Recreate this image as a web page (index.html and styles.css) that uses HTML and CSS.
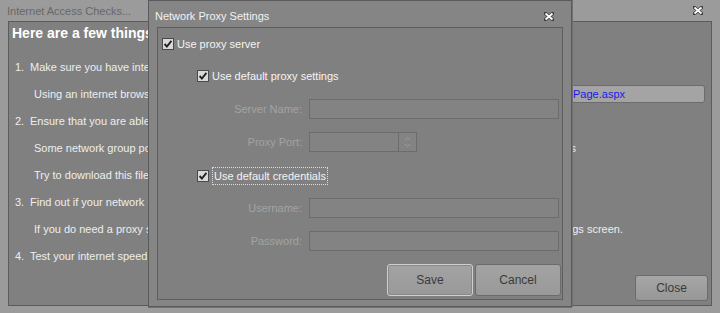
FILE: index.html
```html
<!DOCTYPE html>
<html lang="en">
<head>
  <meta charset="UTF-8">
  <title>Internet Access Checks</title>
  <link rel="stylesheet" href="styles.css">
</head>
<body>

  <!-- Main window -->
  <div class="window">
    <div class="window-title">
      <span>Internet Access Checks...</span>
      <svg class="close-x" width="10" height="9" viewBox="0 0 10 9"><path d="M1.5 1.5 L8.5 7.5 M8.5 1.5 L1.5 7.5" stroke="#3d3d3d" stroke-width="3.6" stroke-linecap="round"/><path d="M1.5 1.5 L8.5 7.5 M8.5 1.5 L1.5 7.5" stroke="#fff" stroke-width="1.8"/></svg>
    </div>

    <div class="window-body">
      <h1>Here are a few things you can check</h1>

      <div class="lines">
        <div class="line step"><span class="text"><span class="num">1.</span>Make sure you have internet access</span></div>
        <div class="line sub">
          <span class="text">Using an internet browser, navigate to:</span>
          <span class="url-box"><span>http://www.example.com/LandingPage.aspx</span></span>
        </div>
        <div class="line step"><span class="text"><span class="num">2.</span>Ensure that you are able to download files</span></div>
        <div class="line sub">
          <span class="text">Some network group policies prevent downloading</span>
          <span class="tail tail-s"><span>certain file types</span></span>
        </div>
        <div class="line sub"><span class="text">Try to download this file from the server</span></div>
        <div class="line step"><span class="text"><span class="num">3.</span>Find out if your network uses a proxy server</span></div>
        <div class="line sub">
          <span class="text">If you do need a proxy server, enter it</span>
          <span class="tail tail-screen"><span>in the Proxy Settings screen.</span></span>
        </div>
        <div class="line step"><span class="text"><span class="num">4.</span>Test your internet speed</span></div>
      </div>

      <button class="btn close-btn">Close</button>
    </div>
  </div>

  <!-- Proxy dialog, lies over the main window -->
  <div class="dialog">
    <div class="dialog-title">
      <span>Network Proxy Settings</span>
      <svg class="close-x" width="10" height="9" viewBox="0 0 10 9"><path d="M1.5 1.5 L8.5 7.5 M8.5 1.5 L1.5 7.5" stroke="#3d3d3d" stroke-width="3.6" stroke-linecap="round"/><path d="M1.5 1.5 L8.5 7.5 M8.5 1.5 L1.5 7.5" stroke="#fff" stroke-width="1.8"/></svg>
    </div>

    <div class="dialog-body">
      <label class="check row-proxy">
        <svg class="box" width="12" height="12" viewBox="0 0 12 12"><rect x="0.5" y="0.5" width="11" height="11" fill="#d9d9d9" stroke="#4a4a4a"/><path d="M2.6 6 L4.9 8.6 L9.4 2.8" fill="none" stroke="#222" stroke-width="1.9"/></svg>
        <span>Use proxy server</span>
      </label>

      <label class="check indent row-default">
        <svg class="box" width="12" height="12" viewBox="0 0 12 12"><rect x="0.5" y="0.5" width="11" height="11" fill="#d9d9d9" stroke="#4a4a4a"/><path d="M2.6 6 L4.9 8.6 L9.4 2.8" fill="none" stroke="#222" stroke-width="1.9"/></svg>
        <span>Use default proxy settings</span>
      </label>

      <div class="field row-server">
        <span class="field-label">Server Name:</span>
        <span class="input"></span>
      </div>

      <div class="field row-port">
        <span class="field-label">Proxy Port:</span>
        <span class="input port">
          <span class="spin">
            <svg width="7" height="14" viewBox="0 0 7 14"><path d="M1 5 L3.5 2.5 L6 5 M1 9 L3.5 11.5 L6 9" fill="none" stroke="#9a9a9a" stroke-width="1"/></svg>
          </span>
        </span>
      </div>

      <label class="check indent row-cred">
        <svg class="box" width="12" height="12" viewBox="0 0 12 12"><rect x="0.5" y="0.5" width="11" height="11" fill="#d9d9d9" stroke="#4a4a4a"/><path d="M2.6 6 L4.9 8.6 L9.4 2.8" fill="none" stroke="#222" stroke-width="1.9"/></svg>
        <span class="focus">Use default credentials</span>
      </label>

      <div class="field row-user">
        <span class="field-label">Username:</span>
        <span class="input"></span>
      </div>

      <div class="field row-pass">
        <span class="field-label">Password:</span>
        <span class="input"></span>
      </div>

      <div class="buttons">
        <button class="btn btn-default">Save</button>
        <button class="btn">Cancel</button>
      </div>
    </div>
  </div>

</body>
</html>
```

FILE: styles.css
```css
body {
  margin: 0;
  font-family: "Liberation Sans", Arial, sans-serif;
  font-size: 11px;
  background-color: #9b9b9b;
}

/* Main window */
.window {
  width: 720px;
  height: 313px;
  background-color: #9b9b9b;
  display: flex;
  flex-direction: column;
}

.window-title {
  height: 21px;
  display: flex;
  align-items: center;
  justify-content: space-between;
  padding: 0 17px 0 7px;
  color: #686868;
}

.window-body {
  flex: 1;
  margin: 0 8px 7px;
  border: 1px solid #5c5c5c;
  background-color: #808080;
  color: #eeeeee;
  display: flex;
  flex-direction: column;
  padding-left: 3px;
}

h1 {
  margin: 2px 0 0;
  max-width: 136px;
  overflow: hidden;
  font-size: 14px;
  line-height: 18px;
  color: #ffffff;
  white-space: nowrap;
}

.lines {
  margin-top: 12px;
}

.line {
  height: 27px;
  line-height: 27px;
  display: flex;
  align-items: center;
  white-space: nowrap;
}

.line .text {
  flex: 0 1 auto;
  min-width: 0;
  overflow: hidden;
}

.step {
  padding-left: 3px;
}

.step .text {
  max-width: 136px;
}

.num {
  display: inline-block;
  width: 15px;
}

.sub {
  padding-left: 22px;
}

.sub .text {
  max-width: 117px;
}

/* only the right end of these shows beside the dialog */
.url-box {
  flex: 0 0 139px;
  margin: -2px 6px 0 auto;
  height: 18px;
  line-height: 16px;
  box-sizing: border-box;
  border: 1px solid #6c6c6c;
  border-radius: 3px;
  background-color: #a4a4a4;
  color: #1a1ae6;
  display: flex;
  justify-content: flex-end;
  padding-right: 79px;
  overflow: hidden;
}

.tail {
  margin-left: auto;
  flex-shrink: 0;
  display: flex;
  justify-content: flex-end;
  overflow: hidden;
}

.tail-s {
  width: 10px;
  padding-right: 135px;
}

.tail-screen {
  width: 57px;
  padding-right: 88px;
}

/* Buttons */
.btn {
  font-family: inherit;
  font-size: 12px;
  color: #3a3a3a;
  border: 1px solid #6b6b6b;
  border-radius: 3px;
  background: linear-gradient(#a6a6a6, #979797);
  padding: 0;
}

.close-btn {
  align-self: flex-end;
  margin: auto 3px 4px 0;
  width: 73px;
  height: 26px;
}

/* Proxy dialog */
.dialog {
  position: absolute;
  left: 148px;
  top: 0;
  width: 424px;
  height: 307px;
  box-sizing: border-box;
  border: 1px solid #5a5a5a;
  box-shadow: 1px 0 0 #707070, 0 1px 0 #707070;
  background-color: #858585;
  display: flex;
  flex-direction: column;
}

.dialog-title {
  height: 26px;
  box-sizing: border-box;
  padding: 4px 17px 0 6px;
  display: flex;
  align-items: center;
  justify-content: space-between;
  color: #f2f2f2;
}

.dialog-body {
  flex: 1;
  margin: 0 8px 6px;
  border: 1px solid #5e5e5e;
  background-color: #808080;
  padding: 0 1px 0 0;
  display: flex;
  flex-direction: column;
}

.check {
  display: flex;
  align-items: center;
  gap: 3px;
  color: #f4f4f4;
  padding-left: 4px;
  height: 16px;
}

.check.indent {
  padding-left: 39px;
}

.row-proxy {
  margin-top: 8px;
}

.row-default {
  margin-top: 16px;
}

.row-cred {
  margin-top: 15px;
  height: 18px;
}

.focus {
  border: 1px dotted #dddddd;
  padding: 1px;
  line-height: 14px;
}

.field {
  display: flex;
  align-items: center;
  height: 20px;
}

.field-label {
  width: 144px;
  margin-right: 7px;
  text-align: right;
  color: #a3a3a3;
}

.input {
  width: 250px;
  height: 20px;
  box-sizing: border-box;
  border: 1px solid #6c6c6c;
  background-color: #838383;
}

.input.port {
  width: 108px;
  display: flex;
  justify-content: flex-end;
}

.spin {
  width: 17px;
  border-left: 1px solid #6c6c6c;
  display: flex;
  align-items: center;
  justify-content: center;
}

.row-server {
  margin-top: 15px;
}

.row-port {
  margin-top: 13px;
}

.row-user {
  margin-top: 13px;
}

.row-pass {
  margin-top: 13px;
}

.buttons {
  margin-top: 13px;
  display: flex;
  justify-content: flex-end;
  gap: 2px;
}

.buttons .btn {
  width: 86px;
  height: 32px;
  background: linear-gradient(#a3a3a3, #999999);
}

.buttons .btn-default {
  border-color: #cfcfcf;
  box-shadow: inset 0 0 0 1px #8a8a8a;
}
```
